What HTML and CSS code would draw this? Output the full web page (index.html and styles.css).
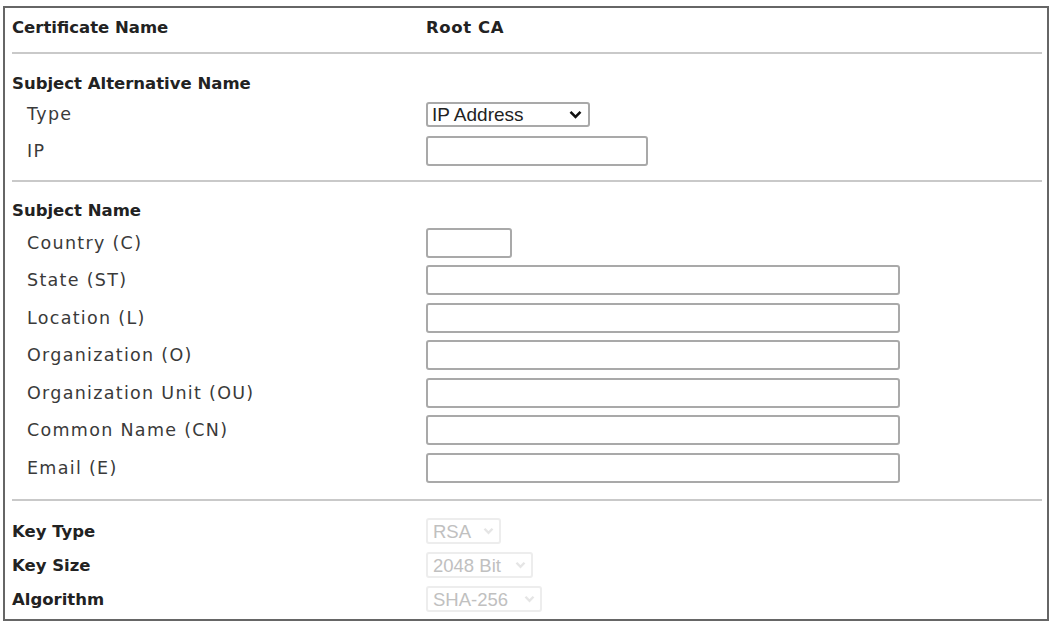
FILE: index.html
```html
<!DOCTYPE html>
<html lang="en">
<head>
    <meta charset="UTF-8">
    <meta name="viewport" content="width=device-width, initial-scale=1.0">
    <title>Certificate Request</title>
    <link rel="stylesheet" href="styles.css">
</head>
<body>
    <div class="panel">
        <div class="row row-cert">
            <div class="label bold">Certificate Name</div>
            <div class="value bold">Root CA</div>
        </div>
        <div class="divider div-1"></div>

        <div class="row row-title">
            <div class="label bold">Subject Alternative Name</div>
        </div>
        <div class="row row-type">
            <div class="label sub">Type</div>
            <div class="value">
                <span class="sel sel-type">
                    <select>
                        <option>IP Address</option>
                        <option>Domain Name</option>
                    </select>
                    <svg class="chev" width="13" height="9" viewBox="0 0 13 9"><path d="M1.5 1.8 L6.5 6.8 L11.5 1.8" fill="none" stroke="#111" stroke-width="2.6"/></svg>
                </span>
            </div>
        </div>
        <div class="row row-ip">
            <div class="label sub">IP</div>
            <div class="value"><input type="text" class="inp inp-ip"></div>
        </div>
        <div class="divider div-2"></div>

        <div class="row row-title">
            <div class="label bold">Subject Name</div>
        </div>
        <div class="row row-field">
            <div class="label sub">Country (C)</div>
            <div class="value"><input type="text" class="inp inp-country"></div>
        </div>
        <div class="row row-field">
            <div class="label sub">State (ST)</div>
            <div class="value"><input type="text" class="inp inp-full"></div>
        </div>
        <div class="row row-field">
            <div class="label sub">Location (L)</div>
            <div class="value"><input type="text" class="inp inp-full"></div>
        </div>
        <div class="row row-field">
            <div class="label sub">Organization (O)</div>
            <div class="value"><input type="text" class="inp inp-full"></div>
        </div>
        <div class="row row-field">
            <div class="label sub">Organization Unit (OU)</div>
            <div class="value"><input type="text" class="inp inp-full"></div>
        </div>
        <div class="row row-field">
            <div class="label sub">Common Name (CN)</div>
            <div class="value"><input type="text" class="inp inp-full"></div>
        </div>
        <div class="row row-field">
            <div class="label sub">Email (E)</div>
            <div class="value"><input type="text" class="inp inp-full"></div>
        </div>
        <div class="divider div-3"></div>

        <div class="row row-key">
            <div class="label bold">Key Type</div>
            <div class="value">
                <span class="sel sel-off sel-rsa">
                    <select disabled><option>RSA</option></select>
                    <svg class="chev" width="11" height="8" viewBox="0 0 11 8"><path d="M1.5 1.8 L5.5 5.8 L9.5 1.8" fill="none" stroke="#a8a8a8" stroke-width="2.3"/></svg>
                </span>
            </div>
        </div>
        <div class="row row-key">
            <div class="label bold">Key Size</div>
            <div class="value">
                <span class="sel sel-off sel-size">
                    <select disabled><option>2048 Bit</option></select>
                    <svg class="chev" width="11" height="8" viewBox="0 0 11 8"><path d="M1.5 1.8 L5.5 5.8 L9.5 1.8" fill="none" stroke="#a8a8a8" stroke-width="2.3"/></svg>
                </span>
            </div>
        </div>
        <div class="row row-key">
            <div class="label bold">Algorithm</div>
            <div class="value">
                <span class="sel sel-off sel-algo">
                    <select disabled><option>SHA-256</option></select>
                    <svg class="chev" width="11" height="8" viewBox="0 0 11 8"><path d="M1.5 1.8 L5.5 5.8 L9.5 1.8" fill="none" stroke="#a8a8a8" stroke-width="2.3"/></svg>
                </span>
            </div>
        </div>
    </div>
</body>
</html>
```

FILE: styles.css
```css
body {
    margin: 6px 2px 0 3px;
    background-color: #fff;
    font-family: "DejaVu Sans", Verdana, sans-serif;
    color: #333;
}
.panel {
    box-sizing: border-box;
    width: 1046px;
    height: 615px;
    border: 2px solid #666;
    padding: 0 5px 0 7px;
}
.row {
    display: flex;
    align-items: center;
}
.label {
    width: 414px;
    flex-shrink: 0;
}
.bold {
    font-weight: bold;
    font-size: 16.5px;
    color: #222;
}
.value.bold {
    letter-spacing: 0.6px;
}
.sub {
    padding-left: 15px;
    box-sizing: border-box;
    font-size: 17.5px;
    letter-spacing: 1.3px;
    color: #3a3a3a;
}
.row-cert { height: 38px; }
.row-title { height: 28px; }
.row-type { height: 34px; }
.row-ip { height: 40px; }
.row-field { height: 37.5px; }
.row-key { height: 34px; }

.divider {
    height: 2px;
    background-color: #c9c9c9;
}
.div-1 { margin: 6px 0 15px; }
.div-2 { margin: 9px 0 14px; }
.div-3 { margin: 12.5px 0 13px; }

.inp {
    box-sizing: border-box;
    height: 30px;
    border: 2px solid #a9a9a9;
    border-radius: 3px;
    background-color: #fff;
    padding: 0 6px;
    font-family: "Liberation Sans", Arial, sans-serif;
    font-size: 18px;
    display: block;
}
.inp-ip { width: 222px; }
.inp-country { width: 86px; }
.inp-full { width: 474px; }

.sel {
    display: inline-flex;
    align-items: center;
}
.sel select {
    -webkit-appearance: none;
    appearance: none;
    box-sizing: border-box;
    border: 2px solid #a9a9a9;
    border-radius: 3px;
    background-color: #fff;
    font-family: "Liberation Sans", Arial, sans-serif;
    font-size: 19px;
    color: #222;
    padding: 0 0 0 4px;
    margin: 0;
}
.sel .chev {
    pointer-events: none;
}
.sel-type select {
    width: 164px;
    height: 25px;
    line-height: 21px;
}
.sel-type .chev {
    margin-left: -21px;
}
.sel-off select {
    height: 26px;
    border: 2px solid #e6e6e6;
    color: #a6a6a6;
    padding-left: 5px;
    font-size: 18.5px;
}
.sel-off .chev {
    margin-left: -18px;
}
.sel-rsa select { width: 75px; }
.sel-size select { width: 107px; }
.sel-algo select { width: 116px; }
```
